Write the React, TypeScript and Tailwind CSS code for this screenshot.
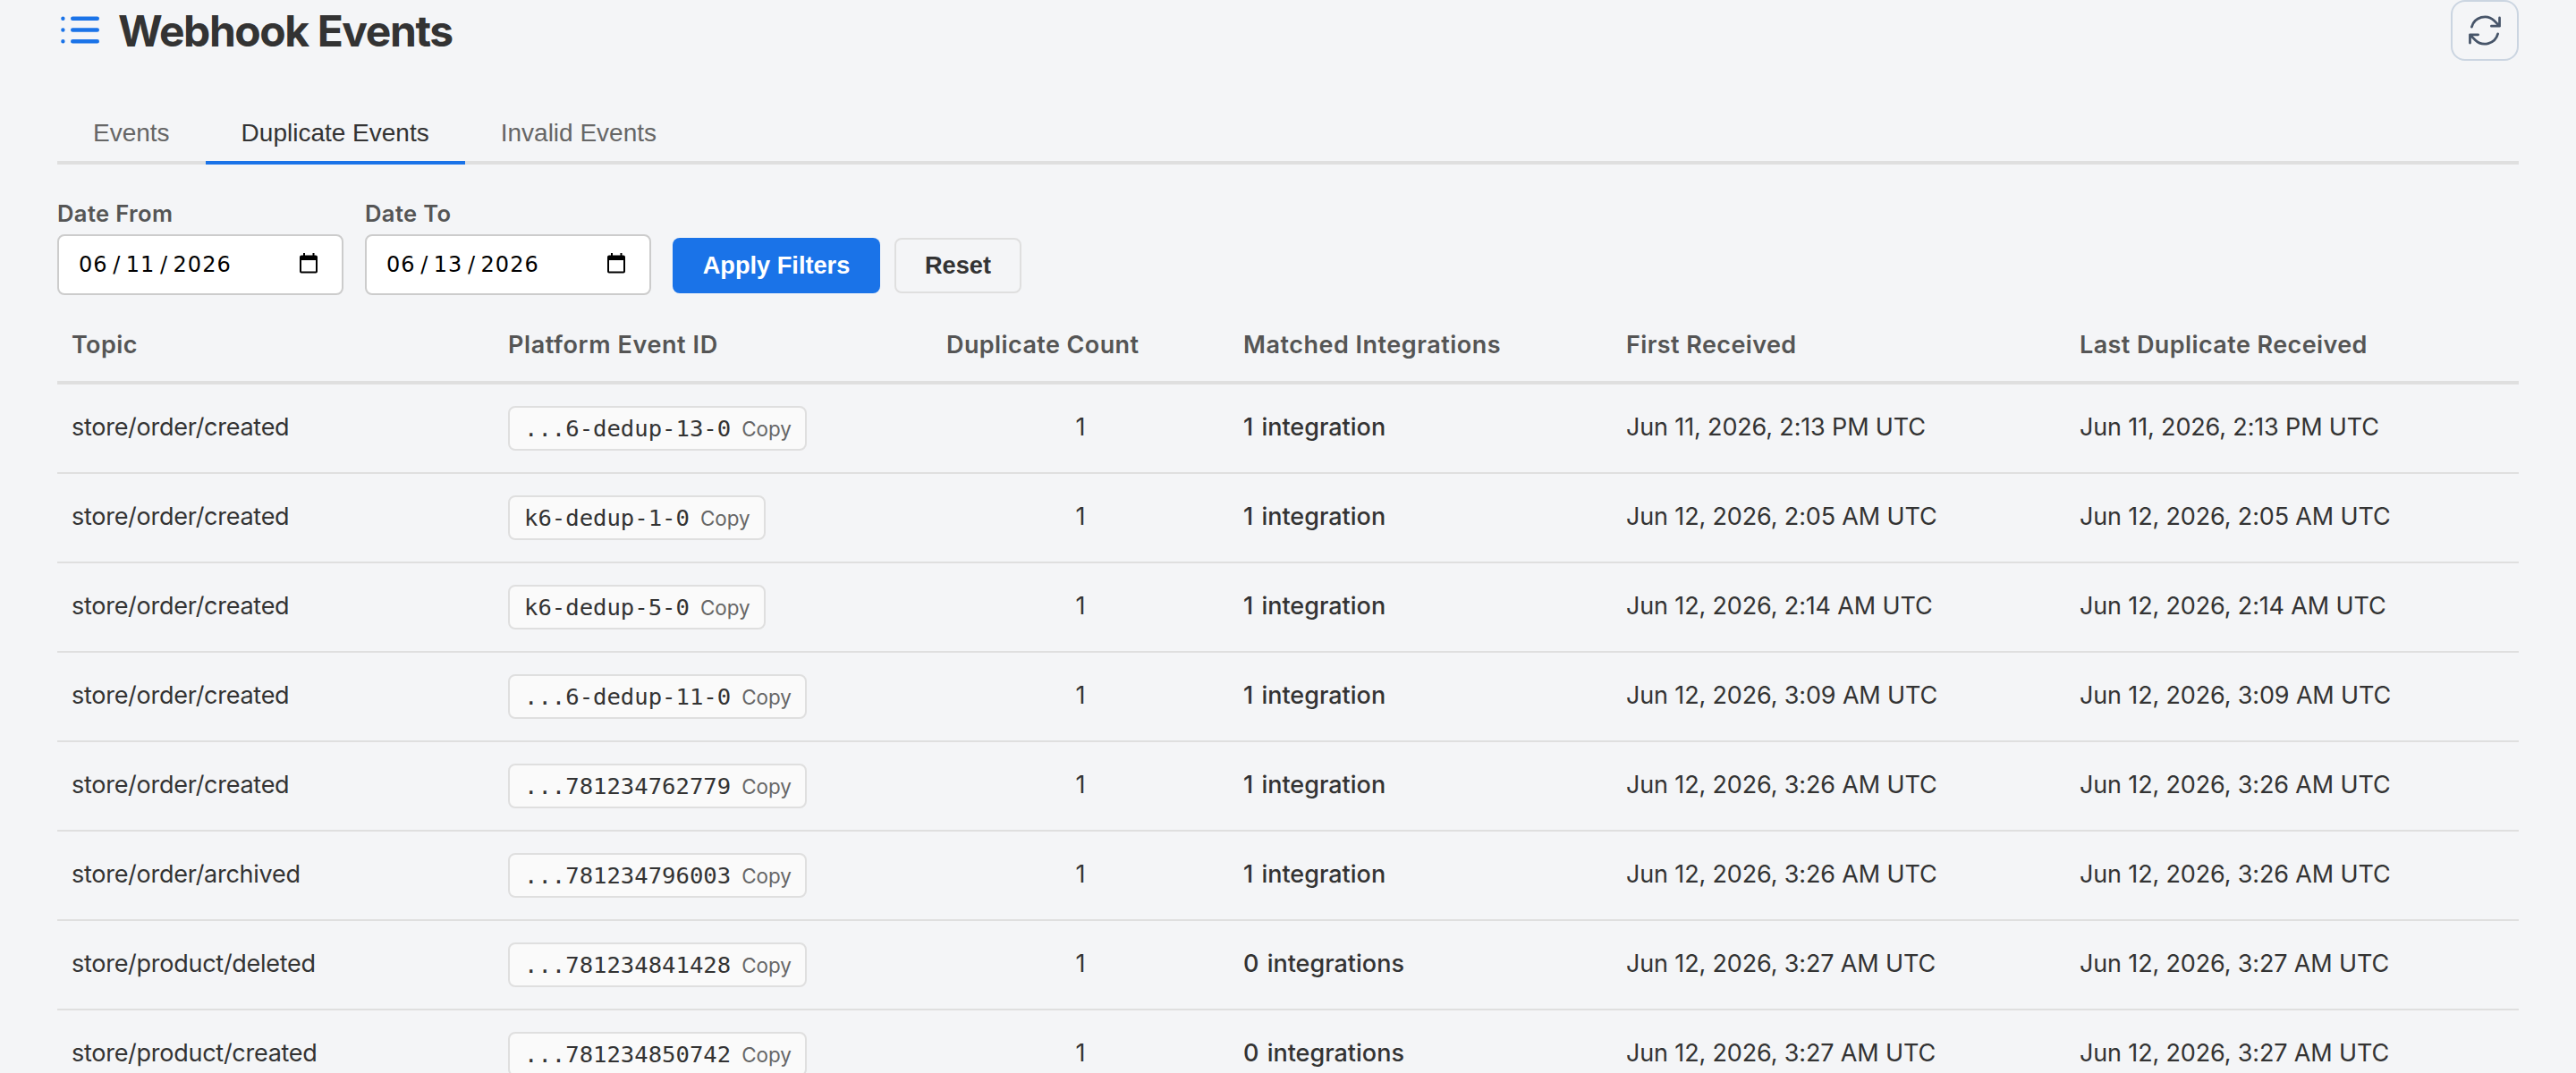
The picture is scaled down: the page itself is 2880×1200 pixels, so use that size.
import { ReactNode } from "react";

interface EventRow {
    topic: string,
    eventId: string,
    integrations: string,
    first: string,
}

const rows: EventRow[] = [
    { topic: "store/order/created", eventId: "...6-dedup-13-0", integrations: "1 integration", first: "Jun 11, 2026, 2:13 PM UTC" },
    { topic: "store/order/created", eventId: "k6-dedup-1-0", integrations: "1 integration", first: "Jun 12, 2026, 2:05 AM UTC" },
    { topic: "store/order/created", eventId: "k6-dedup-5-0", integrations: "1 integration", first: "Jun 12, 2026, 2:14 AM UTC" },
    { topic: "store/order/created", eventId: "...6-dedup-11-0", integrations: "1 integration", first: "Jun 12, 2026, 3:09 AM UTC" },
    { topic: "store/order/created", eventId: "...781234762779", integrations: "1 integration", first: "Jun 12, 2026, 3:26 AM UTC" },
    { topic: "store/order/archived", eventId: "...781234796003", integrations: "1 integration", first: "Jun 12, 2026, 3:26 AM UTC" },
    { topic: "store/product/deleted", eventId: "...781234841428", integrations: "0 integrations", first: "Jun 12, 2026, 3:27 AM UTC" },
    { topic: "store/product/created", eventId: "...781234850742", integrations: "0 integrations", first: "Jun 12, 2026, 3:27 AM UTC" },
];

const GRID = "grid grid-cols-[488px_490px_332px_428px_507px_507px] items-center";

function Tab(props: { children: ReactNode, active?: boolean }) {
    return (
        <button className={props.active
            ? "h-[74px] px-10 pt-[7px] border-b-4 border-[#1a73e8] text-[#333]"
            : "h-[74px] px-10 pt-[7px] border-b-4 border-[#dfdfdf] text-[#666]"}>
            {props.children}
        </button>
    )
}

function DateField(props: { label: string, value: string[] }) {
    return (
        <div className="flex flex-col w-80">
            <label className="h-[40px] text-[25.6px] leading-[34px] tracking-[0.35px] font-semibold text-[#555]">{props.label}</label>
            <div className="flex items-center justify-between h-17 pl-[22px] pr-[26px] bg-white border-2 border-[#ccc] rounded-lg">
                <span className="flex text-black font-['DejaVu_Sans',sans-serif] text-[24px] tracking-[1.1px]">
                    {props.value.map((part, i) => (
                        <span key={i} className="flex">
                            {i > 0 && <span className="w-5 text-center">/</span>}
                            {part}
                        </span>
                    ))}
                </span>
                <svg width="26" height="26" viewBox="0 0 26 26" fill="none">
                    <path d="M7 3.5h16a1 1 0 0 1 1 1v16a1 1 0 0 1-1 1H7a1 1 0 0 1-1-1v-16a1 1 0 0 1 1-1z" stroke="#000" strokeWidth="2" />
                    <path d="M6 3h18v5H6zM9 0h2v3H9zM19.500 0h2v3h-2z" fill="#000" />
                </svg>
            </div>
        </div>
    )
}

export default function App() {
    return (
        <div className="h-[1200px] w-full overflow-hidden bg-[#f4f5f7] px-16 text-[#333] text-[27px] font-['Inter',sans-serif]">

            {/* Page header */}
            <div className="flex items-start justify-between h-[110px]">
                <div className="flex items-center h-17">
                    <svg className="mr-4" width="52" height="48" viewBox="0 0 52 48" stroke="#1a73e8" strokeWidth="4.4" strokeLinecap="round">
                        <path d="M17.2 10.7h27.6M17.2 23.5h27.6M17.2 36.3h27.6" />
                        <path d="M6.4 10.7h.01M6.4 23.5h.01M6.4 36.3h.01" />
                    </svg>
                    <h1 className="pt-[2px] text-[48px] leading-none font-bold tracking-[-1.45px]">Webhook Events</h1>
                </div>
                <button className="flex items-center justify-center w-[76px] h-17 border-2 border-[#cbd5e1] rounded-2xl text-[#475569]">
                    <svg className="shrink-0" width="44" height="44" viewBox="0 0 24 24" fill="none" stroke="currentColor" strokeWidth="1.5" strokeLinecap="round" strokeLinejoin="round">
                        <path d="M16.023 9.348h4.992V4.356M2.985 19.644v-4.992h4.992M2.985 14.652l3.181 3.183a8.25 8.25 0 0 0 13.803-3.7M4.031 9.865a8.25 8.25 0 0 1 13.803-3.7l3.181 3.182" />
                    </svg>
                </button>
            </div>

            {/* Tabs */}
            <div className="flex h-[74px] text-[28px] font-['Liberation_Sans',Arial,sans-serif]">
                <Tab>Events</Tab>
                <Tab active>Duplicate Events</Tab>
                <Tab>Invalid Events</Tab>
                <div className="flex-1 border-b-4 border-[#dfdfdf]" />
            </div>

            {/* Filters */}
            <div className="flex items-end mt-[38px] gap-6">
                <DateField label="Date From" value={["06", "11", "2026"]} />
                <DateField label="Date To" value={["06", "13", "2026"]} />
                <div className="flex gap-4 mb-[2px] text-[27.2px] font-bold font-['Liberation_Sans',Arial,sans-serif]">
                    <button className="w-[232px] h-[62px] rounded-lg bg-[#1a73e8] text-white">Apply Filters</button>
                    <button className="w-[142px] h-[62px] rounded-lg border-2 border-[#dfdfdf]">Reset</button>
                </div>
            </div>

            {/* Events table */}
            <div className={GRID + " mt-4 h-[84px] border-b-4 border-[#dfdfdf] font-semibold tracking-[0.4px] text-[#555] [&>div]:px-4"}>
                <div>Topic</div>
                <div className="tracking-[0.6px]">Platform Event ID</div>
                <div>Duplicate Count</div>
                <div className="tracking-[0.5px]">Matched Integrations</div>
                <div>First Received</div>
                <div>Last Duplicate Received</div>
            </div>
            {rows.map((row, index) => (
                <div key={index} className={GRID + " h-[100px] border-b-2 border-[#dfdfdf] [&>div]:px-4"}>
                    <div className="pb-[2px] tracking-[-0.27px]">{row.topic}</div>
                    <div>
                        <span className="flex w-fit items-center gap-3 h-[50px] pl-4 pr-[15px] bg-[#fafafa] border-2 border-[#dfdfdf] rounded-lg">
                            <span className="font-['DejaVu_Sans_Mono',monospace] text-[25.6px]">{row.eventId}</span>
                            <span className="pt-[2px] text-[22.4px] text-[#666]">Copy</span>
                        </span>
                    </div>
                    <div className="pb-[2px] text-center">1</div>
                    <div className="pb-[2px] font-medium [word-spacing:2px]">{row.integrations}</div>
                    <div className="pb-[2px] tracking-[-0.15px]">{row.first}</div>
                    <div className="pb-[2px] tracking-[-0.15px]">{row.first}</div>
                </div>
            ))}
        </div>
    )
}
